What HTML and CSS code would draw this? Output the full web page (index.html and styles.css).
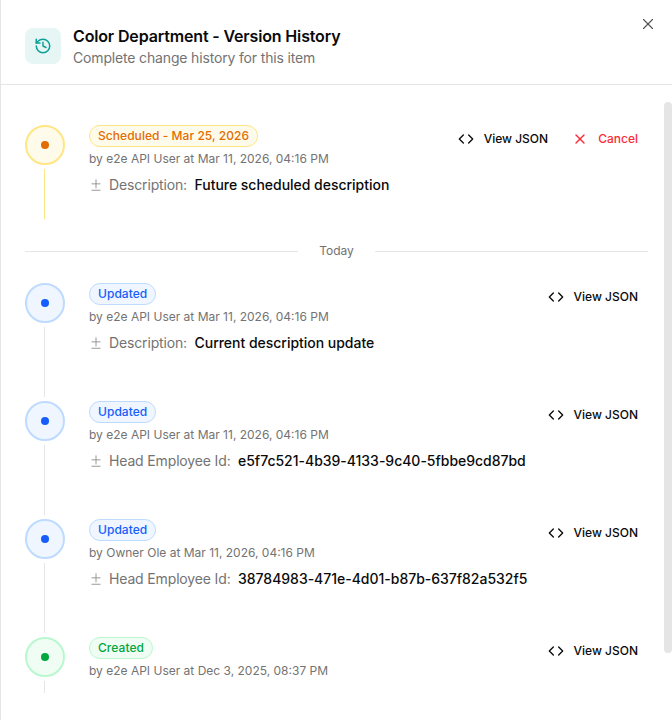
FILE: index.html
```html
<!DOCTYPE html>
<html lang="en">
<head>
    <meta charset="UTF-8">
    <meta name="viewport" content="width=device-width, initial-scale=1.0">
    <title>Version History</title>
    <link rel="stylesheet" href="styles.css">
</head>
<body>
    <div class="modal">
        <header class="modal-header">
            <div class="header-icon">
                <svg viewBox="0 0 24 24" width="18" height="18"><path d="M3 12a9 9 0 1 0 9-9 9.75 9.75 0 0 0-6.74 2.74L3 8"/><path d="M3 3v5h5"/><path d="M12 7v5l4 2"/></svg>
            </div>
            <div class="header-text">
                <h1>Color Department - Version History</h1>
                <p>Complete change history for this item</p>
            </div>
            <button class="close-btn">
                <svg viewBox="0 0 24 24" width="18" height="18"><path d="M18 6 6 18"/><path d="m6 6 12 12"/></svg>
            </button>
        </header>

        <div class="modal-body">
            <!-- Scheduled -->
            <div class="item item-scheduled item-before-divider">
                <div class="rail">
                    <div class="circle"><span class="dot"></span></div>
                    <div class="line"></div>
                </div>
                <div class="content">
                    <span class="badge">Scheduled - Mar 25, 2026</span>
                    <div class="meta">by e2e API User at Mar 11, 2026, 04:16 PM</div>
                    <div class="change">
                        <svg viewBox="0 0 24 24" width="14" height="14"><path d="M12 3v14"/><path d="M5 10h14"/><path d="M5 21h14"/></svg>
                        <span class="field">Description:</span>
                        <span class="value">Future scheduled description</span>
                    </div>
                </div>
                <div class="actions">
                    <button class="action-btn">
                        <svg viewBox="0 0 24 24" width="16" height="16"><path d="m16 18 6-6-6-6"/><path d="m8 6-6 6 6 6"/></svg>
                        View JSON
                    </button>
                    <button class="action-btn cancel">
                        <svg viewBox="0 0 24 24" width="16" height="16"><path d="M18 6 6 18"/><path d="m6 6 12 12"/></svg>
                        Cancel
                    </button>
                </div>
            </div>

            <div class="divider"><span>Today</span></div>

            <div class="item item-updated">
                <div class="rail">
                    <div class="circle"><span class="dot"></span></div>
                    <div class="line"></div>
                </div>
                <div class="content">
                    <span class="badge">Updated</span>
                    <div class="meta">by e2e API User at Mar 11, 2026, 04:16 PM</div>
                    <div class="change">
                        <svg viewBox="0 0 24 24" width="14" height="14"><path d="M12 3v14"/><path d="M5 10h14"/><path d="M5 21h14"/></svg>
                        <span class="field">Description:</span>
                        <span class="value">Current description update</span>
                    </div>
                </div>
                <div class="actions">
                    <button class="action-btn">
                        <svg viewBox="0 0 24 24" width="16" height="16"><path d="m16 18 6-6-6-6"/><path d="m8 6-6 6 6 6"/></svg>
                        View JSON
                    </button>
                </div>
            </div>

            <div class="item item-updated">
                <div class="rail">
                    <div class="circle"><span class="dot"></span></div>
                    <div class="line"></div>
                </div>
                <div class="content">
                    <span class="badge">Updated</span>
                    <div class="meta">by e2e API User at Mar 11, 2026, 04:16 PM</div>
                    <div class="change">
                        <svg viewBox="0 0 24 24" width="14" height="14"><path d="M12 3v14"/><path d="M5 10h14"/><path d="M5 21h14"/></svg>
                        <span class="field">Head Employee Id:</span>
                        <span class="value">e5f7c521-4b39-4133-9c40-5fbbe9cd87bd</span>
                    </div>
                </div>
                <div class="actions">
                    <button class="action-btn">
                        <svg viewBox="0 0 24 24" width="16" height="16"><path d="m16 18 6-6-6-6"/><path d="m8 6-6 6 6 6"/></svg>
                        View JSON
                    </button>
                </div>
            </div>

            <div class="item item-updated">
                <div class="rail">
                    <div class="circle"><span class="dot"></span></div>
                    <div class="line"></div>
                </div>
                <div class="content">
                    <span class="badge">Updated</span>
                    <div class="meta">by Owner Ole at Mar 11, 2026, 04:16 PM</div>
                    <div class="change">
                        <svg viewBox="0 0 24 24" width="14" height="14"><path d="M12 3v14"/><path d="M5 10h14"/><path d="M5 21h14"/></svg>
                        <span class="field">Head Employee Id:</span>
                        <span class="value">38784983-471e-4d01-b87b-637f82a532f5</span>
                    </div>
                </div>
                <div class="actions">
                    <button class="action-btn">
                        <svg viewBox="0 0 24 24" width="16" height="16"><path d="m16 18 6-6-6-6"/><path d="m8 6-6 6 6 6"/></svg>
                        View JSON
                    </button>
                </div>
            </div>

            <div class="item item-created item-last">
                <div class="rail">
                    <div class="circle"><span class="dot"></span></div>
                    <div class="line"></div>
                </div>
                <div class="content">
                    <span class="badge">Created</span>
                    <div class="meta">by e2e API User at Dec 3, 2025, 08:37 PM</div>
                </div>
                <div class="actions">
                    <button class="action-btn">
                        <svg viewBox="0 0 24 24" width="16" height="16"><path d="m16 18 6-6-6-6"/><path d="m8 6-6 6 6 6"/></svg>
                        View JSON
                    </button>
                </div>
            </div>

            <div class="scroll-thumb"></div>
        </div>
    </div>
</body>
</html>
```

FILE: styles.css
```css
body {
    font-family: Inter, "Liberation Sans", sans-serif;
    margin: 0;
    background-color: white;
    color: #0a0a0a;
}
svg {
    fill: none;
    stroke: currentColor;
    stroke-width: 2;
    stroke-linecap: round;
    stroke-linejoin: round;
    flex-shrink: 0;
}
.modal {
    height: 720px;
    overflow: hidden;
    border-left: 1px solid #e5e5e5;
}
.modal-header {
    position: relative;
    display: flex;
    align-items: center;
    gap: 12px;
    height: 85px;
    padding: 8px 24px 0;
    box-sizing: border-box;
    border-bottom: 1px solid #e5e5e5;
}
.header-icon {
    display: flex;
    align-items: center;
    justify-content: center;
    width: 36px;
    height: 36px;
    border-radius: 8px;
    background-color: #e6f6f5;
    color: #0f9f98;
}
.header-text {
    margin-top: 2px;
}
h1 {
    margin: 0;
    font-size: 16px;
    line-height: 20px;
    font-weight: 600;
    letter-spacing: -0.15px;
}
.modal-header p {
    margin: 2px 0 0;
    font-size: 14px;
    line-height: 20px;
    letter-spacing: -0.16px;
    color: #737373;
}
.close-btn {
    position: absolute;
    top: 15px;
    right: 15px;
    display: flex;
    padding: 0;
    border: none;
    background: none;
    color: #525252;
}
.close-btn svg {
    stroke-width: 1.5;
}
.modal-body {
    position: relative;
    padding: 40px 24px 0;
}
.scroll-thumb {
    position: absolute;
    top: 17px;
    right: 0;
    width: 8px;
    height: 551px;
    border-radius: 4px;
    background-color: #e5e5e5;
}
.item {
    display: flex;
}
.rail {
    display: flex;
    flex-direction: column;
    width: 40px;
    margin-right: 24px;
}
.circle {
    display: flex;
    align-items: center;
    justify-content: center;
    width: 40px;
    height: 40px;
    box-sizing: border-box;
    border: 2px solid;
    border-radius: 50%;
    flex-shrink: 0;
}
.dot {
    width: 8px;
    height: 8px;
    border-radius: 50%;
}
.line {
    flex: 1;
    width: 1px;
    margin: 4px 0 4px 19px;
    background-color: #e5e5e5;
}
.content {
    flex: 1;
    padding-bottom: 48px;
}
.item-before-divider .content {
    padding-bottom: 24px;
}
.item-before-divider .line {
    margin-bottom: 0;
}
.item-last .content {
    padding-bottom: 18px;
}
.badge {
    display: inline-block;
    height: 22px;
    box-sizing: border-box;
    padding: 0 8px;
    border: 1px solid;
    border-radius: 11px;
    font-size: 12px;
    line-height: 20px;
    font-weight: 500;
    letter-spacing: 0.05px;
    vertical-align: top;
}
.item-scheduled .circle { border-color: #fee685; background-color: #fffbeb; }
.item-scheduled .dot { background-color: #e26d00; }
.item-scheduled .line { background-color: #fee685; }
.item-scheduled .badge { border-color: #fee685; background-color: #fffbeb; color: #e26d00; }
.item-updated .circle { border-color: #bedbff; background-color: #eff6ff; }
.item-updated .dot { background-color: #155dfc; }
.item-updated .badge { border-color: #bedbff; background-color: #eff6ff; color: #155dfc; }
.item-created .circle { border-color: #b9f8cf; background-color: #f0fdf4; }
.item-created .dot { background-color: #00a63e; }
.item-created .badge { border-color: #b9f8cf; background-color: #f0fdf4; color: #00a63e; }
.meta {
    margin-top: 4px;
    font-size: 12px;
    line-height: 16px;
    color: #737373;
}
.change {
    display: flex;
    align-items: center;
    margin-top: 8px;
    font-size: 14px;
    line-height: 20px;
    white-space: nowrap;
}
.change svg {
    stroke-width: 1.5;
    color: #8a8a8a;
    margin-right: 6px;
}
.field {
    color: #737373;
    margin-right: 7.5px;
    letter-spacing: -0.15px;
}
.value {
    font-weight: 500;
    letter-spacing: -0.02px;
}
.actions {
    display: flex;
    gap: 24px;
    align-self: flex-start;
    padding-right: 10px;
}
.action-btn {
    display: flex;
    align-items: center;
    gap: 10px;
    height: 28px;
    padding: 0 0 1px;
    border: none;
    background: none;
    font-family: inherit;
    font-size: 12px;
    line-height: 16px;
    font-weight: 500;
    color: #0a0a0a;
}
.action-btn.cancel {
    color: #fb2c36;
}
.divider {
    display: flex;
    align-items: center;
    gap: 21px;
    margin: 25px 0 25px;
    height: 14px;
    font-size: 12px;
    line-height: 13px;
    color: #737373;
}
.divider span {
    padding-bottom: 2px;
}
.divider::before,
.divider::after {
    content: "";
    flex: 1;
    height: 1px;
    background-color: #e5e5e5;
}
```
